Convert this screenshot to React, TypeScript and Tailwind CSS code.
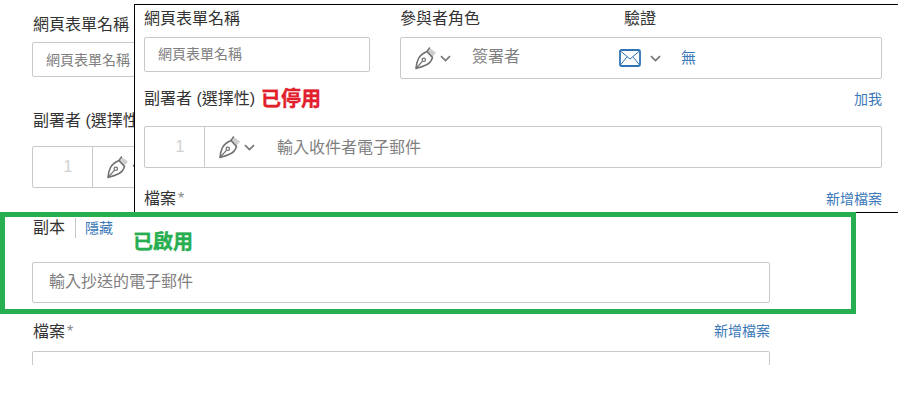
const sans = "font-['Liberation_Sans','Noto_Sans_CJK_TC',sans-serif]"

function PenIcon() {
  return (
    <svg width="23" height="24" viewBox="0 0 23 24" fill="none" className="shrink-0">
      <path d="M13 6.5 L16.5 2.5 L22 6.5 L18 11.5 Z" fill="#cfcfcf" />
      <path
        d="M13 5.5 L18.5 11.5 C17.5 15 15.5 17.5 12 19 C9 20.5 5.5 21.5 2 22.5 C2.2 19 3 15.5 4.5 12.5 C6 9.5 9.5 7 13 5.5 Z"
        stroke="#707070"
        strokeWidth="1.6"
        strokeLinejoin="round"
      />
      <path d="M13 5.5 L15.8 1.5" stroke="#707070" strokeWidth="1.4" />
      <path d="M2.4 22 L8.6 15.2" stroke="#707070" strokeWidth="1.2" />
      <circle cx="9.8" cy="13.8" r="1.7" stroke="#707070" strokeWidth="1.2" />
    </svg>
  )
}

function Chevron() {
  return (
    <svg width="11" height="7" viewBox="0 0 11 7" fill="none" className="shrink-0">
      <path d="M1 1.2 L5.5 5.5 L10 1.2" stroke="#777" strokeWidth="1.7" />
    </svg>
  )
}

function MailIcon() {
  return (
    <svg width="22" height="18" viewBox="0 0 22 18" fill="none" className="shrink-0">
      <rect x="1" y="1" width="20" height="16" rx="1.5" stroke="#2f74b5" strokeWidth="1.8" />
      <path d="M1.5 2 L11 10 L20.5 2 M1.5 16 L8 7.8 M20.5 16 L14 7.8" stroke="#2f74b5" strokeWidth="1" />
    </svg>
  )
}

function RecipientRow({ className }: { className: string }) {
  return (
    <div className={`flex h-[42px] items-center rounded-[2px] border border-[#c9c9c9] bg-white ${className}`}>
      <div className="flex h-full w-[60px] items-center justify-center border-r border-[#c9c9c9] pl-[11px] text-base text-[#d0d0d0]">1</div>
      <div className="ml-[13px] flex items-center gap-[3px]">
        <PenIcon />
        <Chevron />
      </div>
      <span className="ml-[22px] pt-px text-base text-[#808080]">輸入收件者電子郵件</span>
    </div>
  )
}

function FileLabel() {
  return (
    <span className="text-base text-[#333]">
      檔案<span className="ml-[2px] text-[#888]">*</span>
    </span>
  )
}

export default function App() {
  return (
    <div className={`relative h-[415px] w-[898px] overflow-hidden bg-white ${sans}`}>
      {/* Page behind the overlays */}
      <div className="h-[365px] overflow-hidden px-[32px] pt-[14px]">
        <div className="w-[738px]">
          <div className="h-[22px] pl-px text-base leading-[22px] text-[#333]">網頁表單名稱</div>
          <div className="mt-[6px] flex h-[35px] items-center rounded-[2px] border border-[#c9c9c9] px-[13px] text-sm text-[#808080]">網頁表單名稱</div>
          <div className="mt-[33px] h-[22px] pl-px text-base leading-[22px] text-[#333]">副署者 (選擇性)</div>
          <RecipientRow className="mt-[14px]" />
          <div className="mt-[29px] flex h-[22px] items-center pl-px">
            <span className="text-base leading-[22px] text-[#333]">副本</span>
            <span className="ml-[10px] mr-[9px] h-[20px] w-px bg-[#c9c9c9]" />
            <span className="text-[14px] text-[#3a78b8]">隱藏</span>
          </div>
          <div className="mt-[23px] flex h-[41px] items-center rounded-[2px] border border-[#c9c9c9] px-[16px] pb-[2px] text-base text-[#808080]">輸入抄送的電子郵件</div>
          <div className="mt-[16px] flex h-[24px] items-center justify-between pl-px pt-px">
            <FileLabel />
            <span className="text-[14px] text-[#3a78b8]">新增檔案</span>
          </div>
          <div className="mt-[8px] h-[60px] rounded-[2px] border border-[#c9c9c9]" />
        </div>
      </div>

      {/* Pasted screenshot: disabled state */}
      <div className="absolute left-[134px] top-[4px] h-[209px] w-[764px] border-b border-l border-t border-black bg-white pl-[9px] pr-[16px]">
        <div className="flex h-[28px] items-center text-base text-[#333]">
          <span className="w-[256px]">網頁表單名稱</span>
          <span className="w-[224px]">參與者角色</span>
          <span>驗證</span>
        </div>
        <div className="mt-[4px] flex items-start justify-between">
          <div className="flex h-[35px] w-[226px] items-center rounded-[2px] border border-[#c9c9c9] px-[13px] pb-[2px] text-sm text-[#808080]">網頁表單名稱</div>
          <div className="flex h-[42px] w-[482px] items-center rounded-[2px] border border-[#c9c9c9]">
            <div className="ml-[13px] flex items-center gap-[3px]">
              <PenIcon />
              <Chevron />
            </div>
            <span className="ml-[21px] w-[147px] pb-[2px] text-base text-[#808080]">簽署者</span>
            <MailIcon />
            <div className="ml-[9px]"><Chevron /></div>
            <span className="ml-[20px] text-[15px] text-[#3a78b8]">無</span>
          </div>
        </div>
        <div className="mt-[8px] flex h-[24px] items-center justify-between">
          <div className="flex items-center gap-[6px]">
            <span className="text-base text-[#333]">副署者 (選擇性)</span>
            <span className="text-[20px] font-bold text-[#e1202c] [-webkit-text-stroke:0.4px_#e1202c]">已停用</span>
          </div>
          <span className="text-[14px] text-[#3a78b8]">加我</span>
        </div>
        <RecipientRow className="mt-[15px]" />
        <div className="mt-[19px] flex h-[24px] items-center justify-between">
          <FileLabel />
          <span className="text-[14px] text-[#3a78b8]">新增檔案</span>
        </div>
      </div>

      {/* Green highlight */}
      <div className="absolute left-0 top-[212px] h-[102px] w-[856px] border-[5px] border-[#27ae50]" />
      <span className="absolute left-[133px] top-[227px] text-[20px] font-bold text-[#27ae50] [-webkit-text-stroke:0.4px_#27ae50]">已啟用</span>
    </div>
  )
}
